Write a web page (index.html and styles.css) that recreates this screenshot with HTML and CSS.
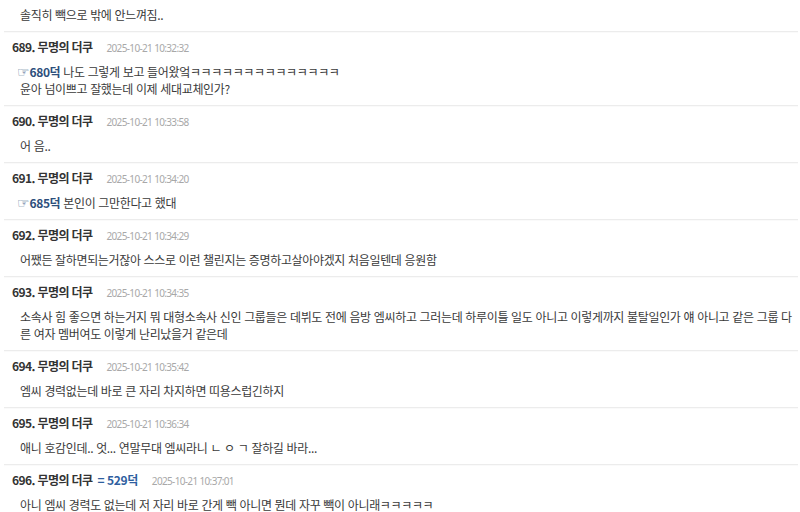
FILE: index.html
```html
<!DOCTYPE html>
<html lang="ko">
<head>
<meta charset="utf-8">
<link rel="stylesheet" href="styles.css">
</head>
<body>
<div class="list">
  <div class="post post-cut">
    <div class="body">솔직히 빽으로 밖에 안느껴짐..</div>
  </div>
  <div class="post">
    <div class="head"><span class="name">689. 무명의 더쿠</span><span class="time">2025-10-21 10:32:32</span></div>
    <div class="body"><span class="ref"><span class="hand">☞</span>680덕</span> 나도 그렇게 보고 들어왔엌ㅋㅋㅋㅋㅋㅋㅋㅋㅋㅋㅋㅋㅋㅋ<br>윤아 넘이쁘고 잘했는데 이제 세대교체인가?</div>
  </div>
  <div class="post">
    <div class="head"><span class="name">690. 무명의 더쿠</span><span class="time">2025-10-21 10:33:58</span></div>
    <div class="body">어 음..</div>
  </div>
  <div class="post">
    <div class="head"><span class="name">691. 무명의 더쿠</span><span class="time">2025-10-21 10:34:20</span></div>
    <div class="body"><span class="ref"><span class="hand">☞</span>685덕</span> 본인이 그만한다고 했대</div>
  </div>
  <div class="post">
    <div class="head"><span class="name">692. 무명의 더쿠</span><span class="time">2025-10-21 10:34:29</span></div>
    <div class="body">어쨌든 잘하면되는거잖아 스스로 이런 챌린지는 증명하고살아야겠지 처음일텐데 응원함</div>
  </div>
  <div class="post">
    <div class="head"><span class="name">693. 무명의 더쿠</span><span class="time">2025-10-21 10:34:35</span></div>
    <div class="body">소속사 힘 좋으면 하는거지 뭐 대형소속사 신인 그룹들은 데뷔도 전에 음방 엠씨하고 그러는데 하루이틀 일도 아니고 이렇게까지 불탈일인가 얘 아니고 같은 그룹 다른 여자 멤버여도 이렇게 난리났을거 같은데</div>
  </div>
  <div class="post">
    <div class="head"><span class="name">694. 무명의 더쿠</span><span class="time">2025-10-21 10:35:42</span></div>
    <div class="body">엠씨 경력없는데 바로 큰 자리 차지하면 띠용스럽긴하지</div>
  </div>
  <div class="post">
    <div class="head"><span class="name">695. 무명의 더쿠</span><span class="time">2025-10-21 10:36:34</span></div>
    <div class="body">애니 호감인데.. 엇... 연말무대 엠씨라니 ㄴ ㅇ ㄱ 잘하길 바라...</div>
  </div>
  <div class="post">
    <div class="head"><span class="name">696. 무명의 더쿠</span><span class="same">= 529덕</span><span class="time">2025-10-21 10:37:01</span></div>
    <div class="body">아니 엠씨 경력도 없는데 저 자리 바로 간게 빽 아니면 뭔데 자꾸 빽이 아니래ㅋㅋㅋㅋㅋ</div>
  </div>
</div>
</body>
</html>
```
FILE: styles.css
```css
html, body {
  margin: 0;
  padding: 0;
  background: #ffffff;
}

body {
  font-family: "Noto Sans CJK KR", "Noto Sans", sans-serif;
  color: #333333;
  overflow: hidden;
}

.list {
  padding: 0 2px 0 4px;
}

.post {
  border-top: 1px solid #ececec;
  box-shadow: inset 0 1px 1px rgba(0, 0, 0, 0.025);
  padding: 6px 4px 8px 8px;
}

.post-cut {
  border-top: none;
  box-shadow: none;
}

.head {
  display: flex;
  align-items: baseline;
  height: 18px;
  line-height: 18px;
  margin-bottom: 7px;
}

.name {
  font-size: 12px;
  font-weight: 700;
  letter-spacing: -0.6px;
  color: #333333;
}

.same {
  font-size: 12px;
  font-weight: 700;
  letter-spacing: -0.4px;
  color: #2f5fa0;
  margin-left: 5px;
}

.time {
  font-family: "Noto Sans", sans-serif;
  font-size: 10px;
  letter-spacing: -0.65px;
  color: #a8a8a8;
  margin-left: 14px;
}

.body {
  padding-left: 8px;
  font-size: 12px;
  line-height: 17px;
  letter-spacing: -0.35px;
  color: #3a3a3a;
}

.ref {
  font-weight: 700;
  color: #2d4f7c;
  letter-spacing: -0.4px;
  line-height: 0;
}

.hand {
  font-family: "DejaVu Sans", sans-serif;
  font-weight: 400;
  font-size: 14px;
  letter-spacing: 0;
  line-height: 0;
  color: #3d5f8c;
  margin-left: -3px;
  margin-right: 0;
}
```
